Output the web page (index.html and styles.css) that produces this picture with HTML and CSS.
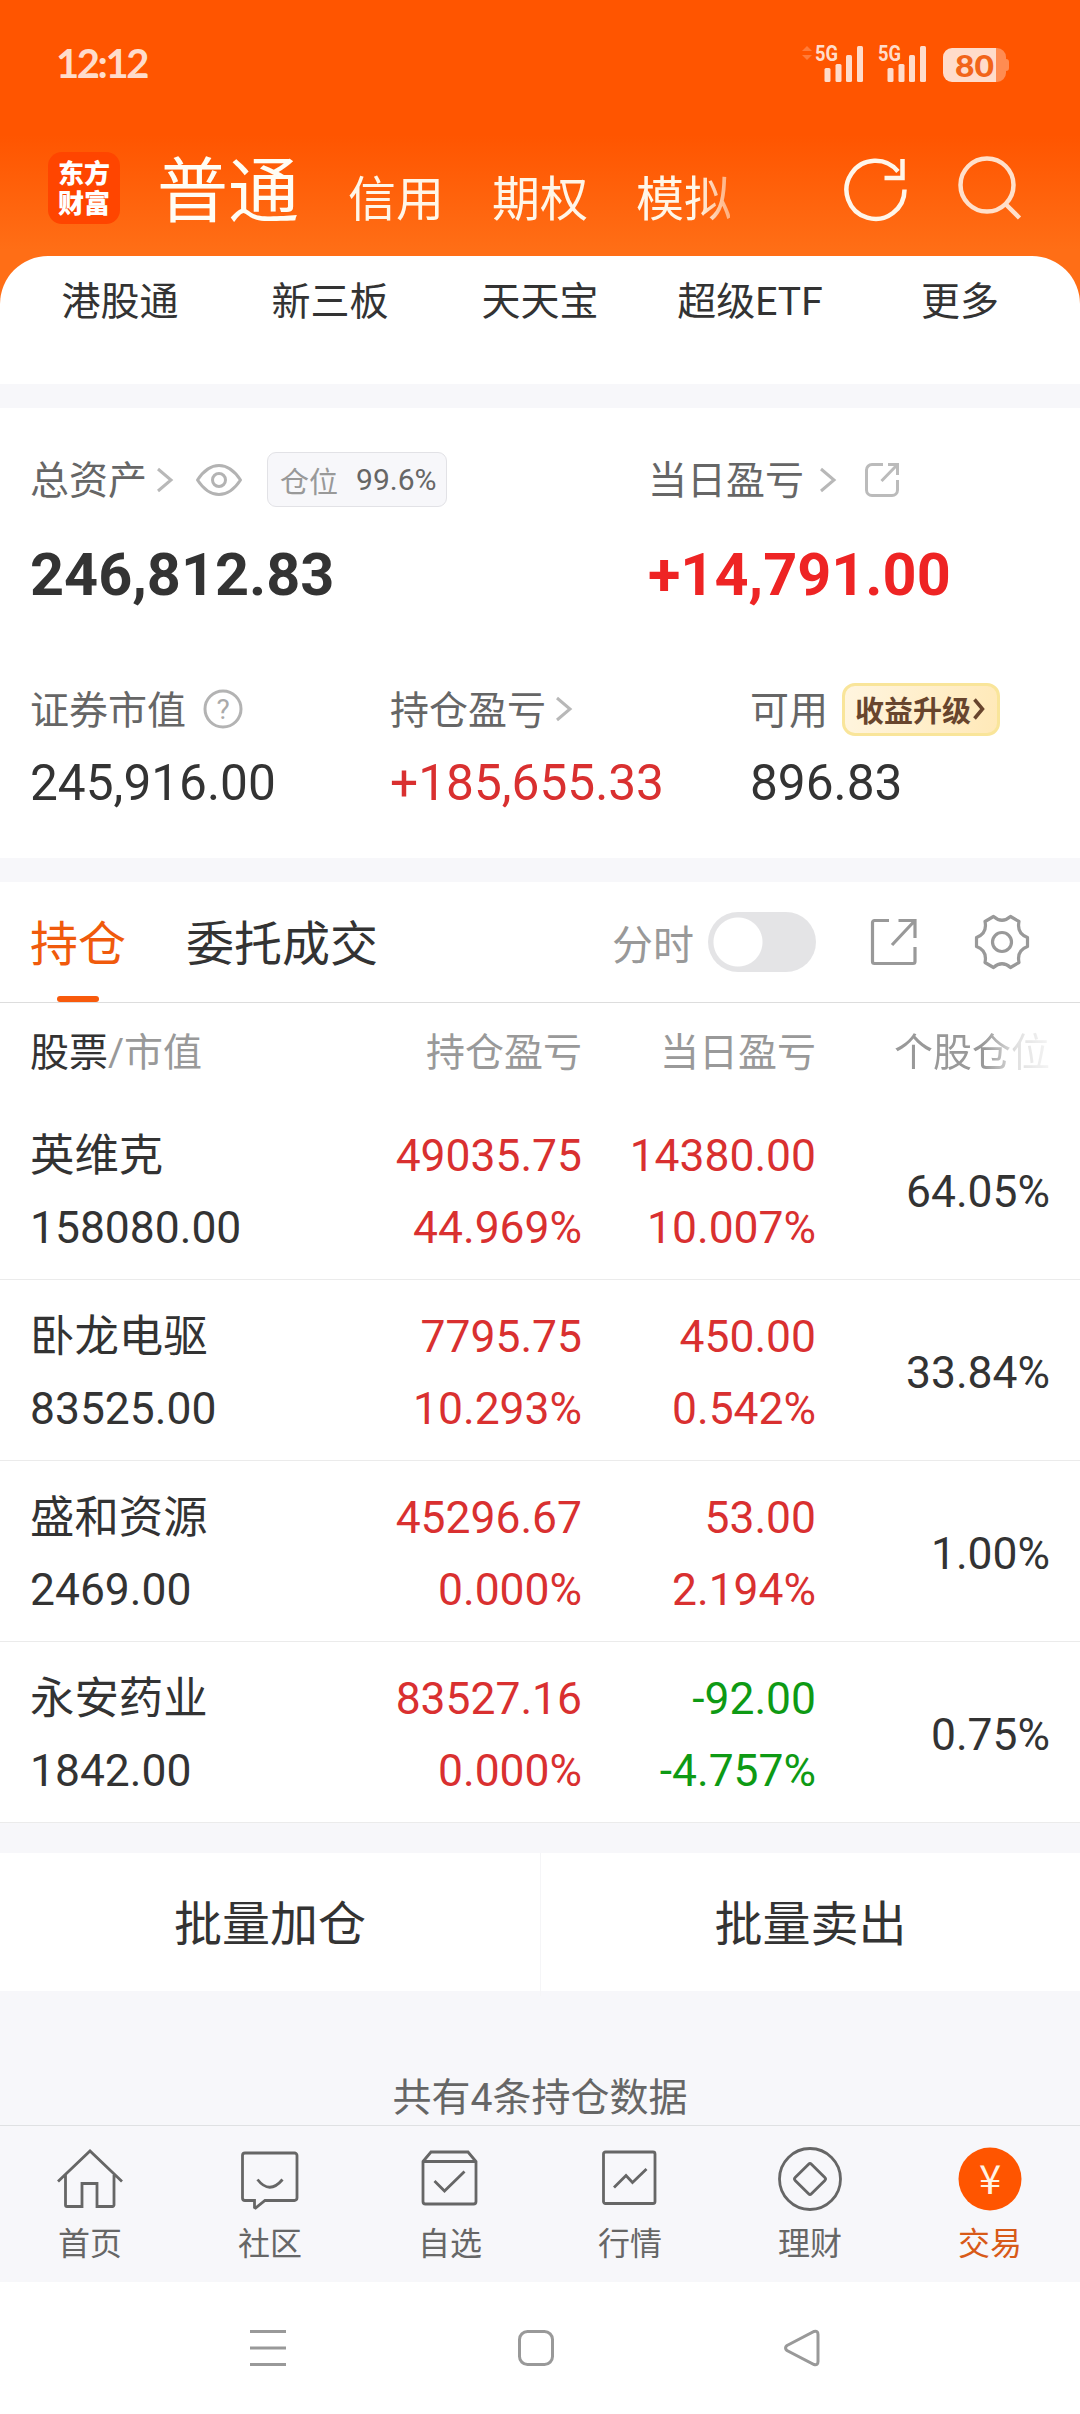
FILE: index.html
```
<!DOCTYPE html>
<html lang="zh-CN">
<head>
  <meta charset="utf-8">
  <title>东方财富 交易</title>
  <link rel="stylesheet" href="styles.css">
</head>
<body>

<div class="top">
  <div class="status">
    <span class="time">12:12</span>
    <svg class="status-icons" width="212" height="44" viewBox="0 0 212 44">
      <g fill="#ff7c3a">
        <path d="M9 6l5 5H4z"/>
        <path d="M4 15h10l-5 5z"/>
      </g>
      <g fill="#ffdccb">
        <text x="17" y="21" class="net" textLength="23" lengthAdjust="spacingAndGlyphs">5G</text>
        <rect x="26.500" y="28" width="6" height="14" rx="1.500"/>
        <rect x="37.500" y="24" width="6" height="18" rx="1.500"/>
        <rect x="48" y="15" width="6" height="27" rx="1.500"/>
        <rect x="59" y="6" width="6" height="36" rx="1.500"/>
        <text x="80" y="21" class="net" textLength="23" lengthAdjust="spacingAndGlyphs">5G</text>
        <rect x="89.500" y="28" width="6" height="14" rx="1.500"/>
        <rect x="100.500" y="24" width="6" height="18" rx="1.500"/>
        <rect x="111" y="15" width="6" height="27" rx="1.500"/>
        <rect x="122" y="6" width="6" height="36" rx="1.500"/>
      </g>
      <path d="M198 8h1a9 9 0 0 1 9 9v2q3 0 3 3v6q0 3-3 3v2a9 9 0 0 1-9 9h-1z" fill="#ff8c52"/>
      <path d="M154 8h44v34h-44a9 9 0 0 1-9-9V17a9 9 0 0 1 9-9z" fill="#ffdccb"/>
      <text x="157" y="36.500" class="battery" textLength="39" lengthAdjust="spacingAndGlyphs">80</text>
    </svg>
  </div>

  <div class="header">
    <div class="logo"><span>东方</span><span>财富</span></div>
    <div class="accounts">
      <span class="current">普通</span>
      <span>信用</span>
      <span>期权</span>
      <span>模拟</span>
    </div>
    <svg class="refresh" width="70" height="70" viewBox="0 0 70 70" fill="none" stroke="#fff6ea" stroke-width="4.500">
      <path d="M64.500 36.500A29 29 0 1 1 58 18.500"/>
      <path d="M62.500 6v19H44.500"/>
    </svg>
    <svg class="search" width="70" height="70" viewBox="0 0 70 70" fill="none" stroke="#ffe0cb" stroke-width="4.500">
      <circle cx="32" cy="31" r="26.500"/>
      <path d="M51 50.500l13.500 13.500"/>
    </svg>
  </div>

  <div class="links">
    <span>港股通</span>
    <span>新三板</span>
    <span>天天宝</span>
    <span>超级ETF</span>
    <span>更多</span>
  </div>
</div>

<div class="assets">
  <div class="total">
    <div>
      <div class="label">
        <span>总资产</span>
        <svg class="chev" width="18" height="28" viewBox="0 0 18 28"><path d="M2 3l13 11L2 25"/></svg>
        <svg class="eye" width="48" height="36" viewBox="0 0 48 36" fill="none" stroke="#b3b3b3" stroke-width="3">
          <path d="M2.500 18Q12 3.500 24 3.500T45.500 18Q36 32.500 24 32.500T2.500 18z" stroke-linejoin="round"/>
          <circle cx="24" cy="18" r="6.500"/>
        </svg>
        <div class="ratio">仓位<b>99.6%</b></div>
      </div>
      <div class="big">246,812.83</div>
    </div>
    <div>
      <div class="label">
        <span>当日盈亏</span>
        <svg class="chev day" width="18" height="28" viewBox="0 0 18 28"><path d="M2 3l13 11L2 25"/></svg>
        <svg class="share" width="36" height="36" viewBox="0 0 36 36" fill="none" stroke="#bbb" stroke-width="3">
          <path d="M19 2.500H8A5.500 5.500 0 0 0 2.500 8v20A5.500 5.500 0 0 0 8 33.500h20a5.500 5.500 0 0 0 5.500-5.500V18"/>
          <path d="M24 2.500h9.500V13M33 3L17.500 19"/>
        </svg>
      </div>
      <div class="big up">+14,791.00</div>
    </div>
  </div>
  <div class="detail">
    <div>
      <div class="label">
        <span>证券市值</span>
        <svg class="help" width="40" height="40" viewBox="0 0 40 40">
          <circle cx="20" cy="20" r="18" fill="none" stroke="#b3b3b3" stroke-width="3"/>
          <text x="20" y="30" text-anchor="middle">?</text>
        </svg>
      </div>
      <div class="num">245,916.00</div>
    </div>
    <div>
      <div class="label">
        <span>持仓盈亏</span>
        <svg class="chev" width="18" height="28" viewBox="0 0 18 28"><path d="M2 3l13 11L2 25"/></svg>
      </div>
      <div class="num up">+185,655.33</div>
    </div>
    <div>
      <div class="label">
        <span>可用</span>
        <div class="upgrade">收益升级<svg width="12" height="22" viewBox="0 0 12 22"><path d="M1.500 1.500L9.500 11l-8 9.500" fill="none" stroke="#68452d" stroke-width="3.500"/></svg></div>
      </div>
      <div class="num">896.83</div>
    </div>
  </div>
</div>

<div class="tabs">
  <span class="tab active">持仓</span>
  <span class="tab">委托成交</span>
  <span class="mode">分时</span>
  <span class="switch"></span>
  <svg class="export" width="50" height="50" viewBox="0 0 50 50" fill="none" stroke="#999" stroke-width="3.200">
    <path d="M20 3.500H5.500a2 2 0 0 0-2 2v39a2 2 0 0 0 2 2H44a2 2 0 0 0 2-2V30"/>
    <path d="M29.500 3.500H46V21M45.500 4L23 28"/>
  </svg>
  <svg class="gear" width="60" height="60" viewBox="0 0 60 60" fill="none" stroke="#999" stroke-width="3.200" stroke-linejoin="round">
    <path d="M21.500 4.500Q30 12 38.500 4.500L47 9.500Q44.500 21.500 55.500 25.500V34.500Q44.500 38.500 47 50.500L38.500 55.500Q30 48 21.500 55.500L13 50.500Q15.500 38.500 4.500 34.500V25.500Q15.500 21.500 13 9.500z"/>
    <circle cx="30" cy="30" r="9.500"/>
  </svg>
</div>

<div class="table">
  <div class="thead">
    <span><em>股票</em>/市值</span>
    <span>持仓盈亏</span>
    <span>当日盈亏</span>
    <span class="fade">个股仓位</span>
  </div>
  <div class="row">
    <div>英维克<br>158080.00</div>
    <div class="up">49035.75<br>44.969%</div>
    <div class="up">14380.00<br>10.007%</div>
    <div>64.05%</div>
  </div>
  <div class="row">
    <div>卧龙电驱<br>83525.00</div>
    <div class="up">7795.75<br>10.293%</div>
    <div class="up">450.00<br>0.542%</div>
    <div>33.84%</div>
  </div>
  <div class="row">
    <div>盛和资源<br>2469.00</div>
    <div class="up">45296.67<br>0.000%</div>
    <div class="up">53.00<br>2.194%</div>
    <div>1.00%</div>
  </div>
  <div class="row">
    <div>永安药业<br>1842.00</div>
    <div class="up">83527.16<br>0.000%</div>
    <div class="down">-92.00<br>-4.757%</div>
    <div>0.75%</div>
  </div>
</div>

<div class="batch">
  <span>批量加仓</span>
  <span>批量卖出</span>
</div>

<div class="count">共有4条持仓数据</div>

<div class="tabbar">
  <div>
    <svg width="70" height="70" viewBox="0 0 70 70">
      <path d="M3 37.500L35 7l32 30.500M10.500 31v30a1.500 1.500 0 0 0 1.500 1.500h15V39.500h15v23h15.500a1.500 1.500 0 0 0 1.500-1.500V31"/>
    </svg>
    首页
  </div>
  <div>
    <svg width="70" height="70" viewBox="0 0 70 70">
      <path d="M10 9h49.500a2.500 2.500 0 0 1 2.500 2.500v42.500a2.500 2.500 0 0 1-2.500 2.500H30l-9.500 7.500-1-.5v-7H10A2.500 2.500 0 0 1 7.500 54V11.500A2.500 2.500 0 0 1 10 9z"/>
      <path d="M22.500 35.500q12 15.500 25 0"/>
    </svg>
    社区
  </div>
  <div>
    <svg width="70" height="70" viewBox="0 0 70 70">
      <path d="M8 17.500l8-9.500h37l8 9.500v40a2.500 2.500 0 0 1-2.500 2.500h-48A2.500 2.500 0 0 1 8 57.500zM8 17.500h53"/>
      <path d="M19.500 37l10 10L49.500 27.500"/>
    </svg>
    自选
  </div>
  <div>
    <svg width="70" height="70" viewBox="0 0 70 70">
      <rect x="8.500" y="8" width="51.500" height="51.500" rx="2"/>
      <path d="M19 43.500l12-12 6.500 7L51.500 25"/>
    </svg>
    行情
  </div>
  <div>
    <svg width="70" height="70" viewBox="0 0 70 70">
      <circle cx="35" cy="35" r="30.500"/>
      <rect x="23.500" y="23.500" width="23" height="23" rx="2" transform="rotate(45 35 35)"/>
    </svg>
    理财
  </div>
  <div class="active">
    <svg width="70" height="70" viewBox="0 0 70 70">
      <circle cx="35" cy="35" r="31.500"/>
      <text x="35" y="50" text-anchor="middle">¥</text>
    </svg>
    交易
  </div>
</div>

<div class="sysnav">
  <svg width="40" height="40" viewBox="0 0 40 40"><path d="M2 3.500h36M2 20h36M2 36.500h36"/></svg>
  <svg width="40" height="40" viewBox="0 0 40 40"><rect x="3.500" y="3.500" width="33" height="33" rx="8"/></svg>
  <svg width="40" height="40" viewBox="0 0 40 40"><path d="M3 17.500L30 3.500q4-1 4 3v27q0 4-4 3L3 22.500q-3-2.500 0-5z"/></svg>
</div>

</body>
</html>
```
FILE: styles.css
```
* {
  box-sizing: border-box;
}
body {
  margin: 0;
  width: 1080px;
  height: 2414px;
  overflow: hidden;
  background: #f7f7fa;
  color: #333;
  font-family: Roboto, "Noto Sans CJK SC", sans-serif;
  font-size: 39px;
  font-weight: 400;
}
svg {
  display: block;
  flex: none;
}
.up {
  color: #d93030;
}
.down {
  color: #0e9a14;
}

/* orange header */
.top {
  height: 384px;
  background: linear-gradient(#ff5500 0, #ff5500 135px, #ff6e16 250px, #ff6e16 100%);
}
.status {
  display: flex;
  justify-content: space-between;
  height: 128px;
  padding: 40px 70px 0 56px;
}
.time {
  font: bold 40px/46px Lato, sans-serif;
  letter-spacing: -2.4px;
  color: #ffdccb;
}
.net {
  font: bold 22px Roboto, sans-serif;
}
.battery {
  font: 900 31px Lato, sans-serif;
  fill: #f26419;
}
.header {
  display: flex;
  height: 128px;
  padding-left: 48px;
}
.logo {
  display: flex;
  flex-direction: column;
  align-items: center;
  width: 72px;
  height: 72px;
  margin-top: 24px;
  padding-top: 5px;
  border-radius: 14px;
  background: #ff4500;
  color: #fff;
  font-family: "Noto Sans CJK SC", sans-serif;
  font-size: 26px;
  font-weight: 900;
  line-height: 30px;
}
.accounts {
  display: flex;
  align-items: baseline;
  width: 573px;
  height: 128px;
  margin-left: 37px;
  padding-top: 14px;
  color: #fff6e8;
  font-size: 48px;
  line-height: 100px;
  white-space: nowrap;
  -webkit-mask: linear-gradient(90deg, #000 540px, rgba(0, 0, 0, .5) 573px);
}
.accounts span {
  margin-right: 48px;
}
.accounts .current {
  color: #fffdf4;
  font-size: 71px;
  margin-right: 49px;
}
.refresh {
  margin: 25px 0 0 110px;
}
.search {
  margin: 26px 0 0 45px;
}
.links {
  display: grid;
  grid-template-columns: repeat(5, 210px);
  height: 128px;
  padding: 17px 15px 0;
  border-radius: 48px 48px 0 0;
  background: #fff;
  line-height: 58px;
  text-align: center;
}

/* account summary */
.assets {
  height: 450px;
  margin-top: 24px;
  padding: 42px 0 0 30px;
  background: #fff;
}
.total {
  display: grid;
  grid-template-columns: 618px 1fr;
}
.total .label {
  padding-bottom: 1px;
}
.label {
  display: flex;
  align-items: center;
  height: 60px;
  color: #666;
  white-space: nowrap;
}
.label span {
  padding-bottom: 5px;
}
.big {
  margin-top: 25px;
  font-size: 59.4px;
  font-weight: 700;
  line-height: 80px;
}
.big.up {
  color: #ee2424;
}
.chev {
  margin-left: 9px;
  fill: none;
  stroke: #b8b8b8;
  stroke-width: 3;
}
.chev.day {
  margin-left: 15px;
}
.eye {
  margin-left: 21px;
}
.share {
  margin-left: 27px;
}
.ratio {
  display: flex;
  align-items: center;
  width: 180px;
  height: 55px;
  margin-left: 24px;
  padding-left: 12px;
  border: 1px solid #e2e2e6;
  border-radius: 9px;
  background: #f7f7fa;
  color: #999;
  font-size: 29px;
}
.ratio b {
  margin-left: 18px;
  color: #666;
  font-size: 30px;
  font-weight: 400;
}
.detail {
  display: grid;
  grid-template-columns: 360px 360px 1fr;
  margin-top: 64px;
}
.help {
  margin-left: 17px;
}
.help text {
  font-size: 28px;
  fill: #aaa;
}
.num {
  margin-top: 14px;
  font-size: 49.6px;
  line-height: 60px;
}
.upgrade {
  display: flex;
  align-items: center;
  gap: 2px;
  width: 158px;
  height: 53px;
  margin-left: 14px;
  padding-left: 10px;
  border: 3px solid #f9e59a;
  border-radius: 13px;
  background: linear-gradient(100deg, #fff5df, #ffe9b8);
  color: #68452d;
  font-size: 29px;
  font-weight: 700;
}

/* tabs over the holdings */
.tabs {
  display: flex;
  align-items: center;
  height: 121px;
  margin-top: 24px;
  padding-left: 30px;
  border-bottom: 1px solid #ddd;
  background: #fff;
  font-size: 48px;
}
.tab {
  position: relative;
  height: 120px;
  margin-right: 60px;
  line-height: 125px;
}
.tab.active {
  color: #f05a0c;
}
.tab.active::after {
  content: "";
  position: absolute;
  left: 27px;
  bottom: 0;
  width: 42px;
  height: 6px;
  border-radius: 3px;
  background: #f85a0c;
}
.mode {
  width: 82px;
  margin: 0 14px 0 174px;
  color: #999;
  font-size: 41px;
}
.switch {
  width: 108px;
  height: 60px;
  border-radius: 30px;
  background: radial-gradient(circle at 30px 30px, #fff 24px, #e4e4e6 25px);
}
.export {
  margin-left: 53px;
}
.gear {
  margin-left: 53px;
}

/* holdings */
.table {
  background: #fff;
}
.thead, .row {
  display: grid;
  grid-template-columns: 252px 300px 234px 234px;
  padding-left: 30px;
  text-align: right;
}
.thead {
  height: 96px;
  color: #999;
  line-height: 101px;
}
.thead em {
  color: #333;
  font-style: normal;
}
.thead span:first-child, .row div:first-child {
  text-align: left;
  white-space: nowrap;
}
.fade {
  -webkit-mask: linear-gradient(90deg, #000 168px, rgba(0, 0, 0, .3) 200px, rgba(0, 0, 0, .1) 234px);
}
.row {
  align-items: center;
  height: 181px;
  padding-top: 5px;
  border-bottom: 1px solid #ebebeb;
  font-size: 44.4px;
  line-height: 72px;
}

.batch {
  display: grid;
  grid-template-columns: 1fr 1fr;
  height: 138px;
  margin-top: 30px;
  background: #fff;
  font-size: 48px;
  line-height: 143px;
  text-align: center;
}
.batch span + span {
  border-left: 1px solid #f5f5f7;
}
.count {
  height: 134px;
  padding-top: 78px;
  color: #666;
  line-height: 58px;
  text-align: center;
}

/* bottom navigation */
.tabbar {
  display: grid;
  grid-template-columns: repeat(6, 180px);
  height: 157px;
  border-top: 1px solid #dfe1e3;
  color: #666;
  font-size: 32px;
  line-height: 48px;
  text-align: center;
}
.tabbar svg {
  margin: 18px auto 6px;
  fill: none;
  stroke: #666;
  stroke-width: 2.8;
}
.tabbar .active {
  color: #d85a18;
}
.tabbar .active svg {
  fill: #ff5500;
  stroke: none;
}
.tabbar .active text {
  font-family: "Noto Sans CJK SC", sans-serif;
  font-size: 40px;
  fill: #fff3e4;
}
.sysnav {
  display: grid;
  grid-template-columns: 40px 40px 40px;
  column-gap: 228px;
  height: 132px;
  padding: 46px 0 0 248px;
  background: #fff;
}
.sysnav svg {
  fill: none;
  stroke: #999;
  stroke-width: 3;
}
```
